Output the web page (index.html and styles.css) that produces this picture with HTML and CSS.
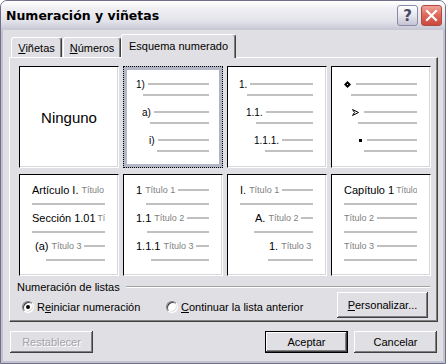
FILE: index.html
```html
<!DOCTYPE html>
<html lang="es">

<head>
  <meta charset="UTF-8">
  <title>Numeración y viñetas</title>
  <link rel="stylesheet" href="styles.css">
</head>

<body>
  <div class="window">
    <div class="titlebar">
      <span class="title">Numeración y viñetas</span>
      <span class="cap-btn help">?</span>
      <span class="cap-btn close">
        <svg width="13" height="13" viewBox="0 0 13 13"><path d="M2 2 L11 11 M11 2 L2 11" stroke="#fff" stroke-width="2.2" stroke-linecap="square" fill="none"/></svg>
      </span>
    </div>

    <div class="client">
      <div class="tabs">
        <div class="tab tab-1"><span><u>V</u>iñetas</span></div>
        <div class="tab tab-2"><span><u>N</u>úmeros</span></div>
        <div class="tab tab-3 active">Esquema numerado</div>
      </div>

      <div class="panel">
        <div class="gallery">
          <div class="box none">Ninguno</div>

          <div class="box outline selected">
            <div class="item">
              <div class="head m12"><span>1)</span><i class="rule"></i></div>
              <i class="rule m19"></i>
            </div>
            <div class="item">
              <div class="head m18"><span>a)</span><i class="rule"></i></div>
              <i class="rule m26"></i>
            </div>
            <div class="item">
              <div class="head m25"><span>i)</span><i class="rule"></i></div>
              <i class="rule m33"></i>
            </div>
          </div>

          <div class="box outline">
            <div class="item">
              <div class="head m11"><span>1.</span><i class="rule"></i></div>
              <i class="rule m19"></i>
            </div>
            <div class="item">
              <div class="head m18"><span>1.1.</span><i class="rule"></i></div>
              <i class="rule m28"></i>
            </div>
            <div class="item">
              <div class="head m26"><span>1.1.1.</span><i class="rule"></i></div>
              <i class="rule m37"></i>
            </div>
          </div>

          <div class="box outline">
            <div class="item">
              <div class="head m12">
                <svg class="bullet" width="7" height="7" viewBox="0 0 7 7"><path d="M3.5 0 L7 3.5 L3.5 7 L0 3.5Z" fill="#000"/><rect x="3" y="3" width="1" height="1" fill="#fff"/></svg>
                <i class="rule"></i>
              </div>
              <i class="rule m19"></i>
            </div>
            <div class="item">
              <div class="head m20">
                <svg class="bullet" width="7" height="7" viewBox="0 0 7 7"><path d="M0.5 0.5 L6.5 3.5 L0.5 6.5 L2.5 3.5Z" fill="none" stroke="#000" stroke-width="1"/></svg>
                <i class="rule"></i>
              </div>
              <i class="rule m26"></i>
            </div>
            <div class="item">
              <div class="head m27"><i class="dot"></i><i class="rule"></i></div>
              <i class="rule m32"></i>
            </div>
          </div>

          <div class="box heading">
            <div class="item">
              <div class="head m12"><span>Artículo I.</span><span class="ttl">Título</span><i class="rule"></i></div>
              <i class="rule m12"></i>
            </div>
            <div class="item">
              <div class="head m12"><span>Sección 1.01</span><span class="ttl tight">Tí</span></div>
              <i class="rule m12"></i>
            </div>
            <div class="item">
              <div class="head m15"><span>(a)</span><span class="ttl">Título 3</span><i class="rule"></i></div>
              <i class="rule m26"></i>
            </div>
          </div>

          <div class="box heading">
            <div class="item">
              <div class="head m12"><span>1</span><span class="ttl">Título 1</span><i class="rule"></i></div>
              <i class="rule m22"></i>
            </div>
            <div class="item">
              <div class="head m12"><span>1.1</span><span class="ttl">Título 2</span><i class="rule"></i></div>
              <i class="rule m23"></i>
            </div>
            <div class="item">
              <div class="head m12"><span>1.1.1</span><span class="ttl">Título 3</span><i class="rule"></i></div>
              <i class="rule m27"></i>
            </div>
          </div>

          <div class="box heading">
            <div class="item">
              <div class="head m12"><span>I.</span><span class="ttl">Título 1</span><i class="rule"></i></div>
              <i class="rule m12"></i>
            </div>
            <div class="item">
              <div class="head m27"><span>A.</span><span class="ttl">Título 2</span><i class="rule"></i></div>
              <i class="rule m26"></i>
            </div>
            <div class="item">
              <div class="head m41"><span>1.</span><span class="ttl">Título 3</span><i class="rule"></i></div>
              <i class="rule m40"></i>
            </div>
          </div>

          <div class="box heading">
            <div class="item">
              <div class="head m12"><span>Capítulo 1</span><span class="ttl tight">Título</span></div>
              <i class="rule m12"></i>
            </div>
            <div class="item">
              <div class="head m12"><span class="ttl first">Título 2</span><i class="rule"></i></div>
              <i class="rule m12"></i>
            </div>
            <div class="item">
              <div class="head m12"><span class="ttl first">Título 3</span><i class="rule"></i></div>
              <i class="rule m12"></i>
            </div>
          </div>
        </div>

        <div class="group">
          <span>Numeración de listas</span>
          <span class="etch"></span>
        </div>

        <div class="options">
          <label class="option opt-1"><span class="radio checked"></span><span>R<u>e</u>iniciar numeración</span></label>
          <label class="option"><span class="radio"></span><span><u>C</u>ontinuar la lista anterior</span></label>
          <button class="btn custom"><u>P</u>ersonalizar...</button>
        </div>
      </div>

      <div class="footer">
        <button class="btn disabled">Restablecer</button>
        <button class="btn default">Aceptar</button>
        <button class="btn">Cancelar</button>
      </div>
    </div>
  </div>
</body>

</html>
```

FILE: styles.css
```css
* {
  box-sizing: border-box;
}

body {
  margin: 0;
  background: #fff;
  font-family: "Liberation Sans", Arial, sans-serif;
  font-size: 11px;
  color: #000;
}

.window {
  width: 446px;
  height: 364px;
  background: #e0dfe3;
  border: 1px solid #6f6f87;
  border-radius: 7px 7px 0 0;
  display: flex;
  flex-direction: column;
  overflow: hidden;
}

.titlebar {
  height: 29px;
  flex: none;
  display: flex;
  align-items: center;
  padding: 0 3px 0 5px;
  background: linear-gradient(#ffffff, #f0f0f4 25%, #e2e2ea 70%, #c6c6d4);
}

.title {
  flex: 1;
  font: bold 12.5px "DejaVu Sans", sans-serif;
  color: #000;
}

.cap-btn {
  width: 21px;
  height: 21px;
  border-radius: 3px;
  display: flex;
  align-items: center;
  justify-content: center;
}

.help {
  margin-right: 3px;
  border: 1px solid #8a8aa6;
  background: linear-gradient(#ffffff, #e6e6ee 50%, #c4c4d4);
  font: bold 15px "DejaVu Sans", sans-serif;
  color: #4a4a62;
}

.close {
  border: 1px solid #b04a40;
  background: linear-gradient(#f0a49a, #e06a5c 45%, #c8493c);
}

.client {
  flex: 1;
  border: 2px solid #c2c2d2;
  border-top: none;
  padding: 4px 5px 0 6px;
  display: flex;
  flex-direction: column;
}

/* tabs */
.tabs {
  display: flex;
  align-items: flex-end;
  height: 23px;
  position: relative;
  z-index: 1;
}

.tab {
  height: 20px;
  background: #e0dfe3;
  border-top: 1px solid #fff;
  border-left: 1px solid #fff;
  border-right: 1px solid #404040;
  border-radius: 3px 3px 0 0;
  box-shadow: inset -1px 0 0 #808080;
  display: flex;
  align-items: center;
  justify-content: center;
  padding-top: 1px;
}

.tab-1 {
  width: 51px;
  margin-left: 2px;
}

.tab-2 {
  width: 58px;
  margin-left: 1px;
}

.tab-3 {
  width: 115px;
}

.tab.active {
  height: 24px;
  margin-bottom: -1px;
  padding-top: 0;
  padding-bottom: 1px;
}

/* panel */
.panel {
  height: 265px;
  border: 1px solid;
  border-color: #fff #404040 #404040 #fff;
  box-shadow: inset -1px -1px 0 #808080;
  padding: 8px 0 0 9px;
}

.gallery {
  display: grid;
  grid-template-columns: repeat(4, 100px);
  grid-template-rows: repeat(2, 102px);
  gap: 6px 4px;
}

.box {
  background: #fff;
  border: 1px solid;
  border-color: #000 #fff #fff #000;
  box-shadow: inset -1px -1px 0 #d8d8dc;
  padding-right: 13px;
  font-size: 10px;
  overflow: hidden;
}

/* selected: grey frame inside a dotted focus line */
.box.selected {
  border: 4px solid #b3b6c4;
  outline: 1px dotted #000;
  outline-offset: -1px;
  box-shadow: none;
  padding-top: 7px;
  padding-right: 10px;
}

.box.selected .item {
  margin-left: -3px;
}

.box.none {
  display: flex;
  align-items: center;
  justify-content: center;
  padding: 0;
  font-size: 15px;
}

.outline {
  padding-top: 10px;
}

.outline .item {
  height: 28px;
}

.heading {
  padding-top: 8px;
  font-size: 11px;
}

.heading .item {
  height: 28px;
}

.head {
  height: 14px;
  display: flex;
  align-items: center;
  white-space: nowrap;
  overflow: hidden;
}

.head span,
.head svg {
  flex: none;
}

.head .rule {
  flex: 1;
  min-width: 0;
  margin-left: 3px;
}

.rule {
  display: block;
  height: 2px;
  background: #c0c0c0;
}

.outline .item > .rule {
  margin-top: 3px;
}

.heading .item > .rule {
  margin-top: 6px;
}

.ttl {
  margin-left: 3px;
  font-size: 9px;
  color: #808080;
}

.ttl.first {
  margin-left: 0;
}

.ttl.tight {
  margin-left: 2px;
  font-size: 8.5px;
}

.bullet {
  display: block;
  margin-right: 2px;
}

.dot {
  flex: none;
  width: 3px;
  height: 3px;
  background: #000;
  margin-right: 2px;
}

.m11 { margin-left: 11px; }
.m12 { margin-left: 12px; }
.m15 { margin-left: 15px; }
.m18 { margin-left: 18px; }
.m19 { margin-left: 19px; }
.m20 { margin-left: 20px; }
.m22 { margin-left: 22px; }
.m23 { margin-left: 23px; }
.m25 { margin-left: 25px; }
.m26 { margin-left: 26px; }
.m27 { margin-left: 27px; }
.m28 { margin-left: 28px; }
.m32 { margin-left: 32px; }
.m33 { margin-left: 33px; }
.m37 { margin-left: 37px; }
.m40 { margin-left: 40px; }
.m41 { margin-left: 41px; }

/* list options */
.group {
  display: flex;
  align-items: center;
  height: 12px;
  margin: 5px 0 0 -2px;
}

.etch {
  flex: 1;
  margin: 0 7px 0 6px;
  border-top: 1px solid #a0a0a0;
  border-bottom: 1px solid #fff;
}

.options {
  display: flex;
  align-items: center;
  height: 26px;
  margin-top: -1px;
}

.option {
  display: flex;
  align-items: center;
  gap: 3px;
  padding-top: 3px;
}

.opt-1 {
  width: 144px;
  margin-left: 3px;
}

.radio {
  flex: none;
  width: 12px;
  height: 12px;
  border-radius: 50%;
  background: #fff;
  border: 1px solid;
  border-color: #808080 #fff #fff #808080;
  box-shadow: inset 1px 1px 0 #404040, inset -1px -1px 0 #e0dfe3;
  display: flex;
  align-items: center;
  justify-content: center;
}

.radio.checked::after {
  content: "";
  width: 4px;
  height: 4px;
  border-radius: 50%;
  background: #000;
}

.btn {
  width: 83px;
  height: 22px;
  padding: 0;
  border: none;
  background: #e0dfe3;
  font: 11px "Liberation Sans", Arial, sans-serif;
  color: #000;
  box-shadow: inset -1px -1px 0 #404040, inset 1px 1px 0 #fff, inset -2px -2px 0 #808080;
}

.custom {
  width: 91px;
  height: 26px;
  margin-left: auto;
  margin-right: 9px;
}

.footer {
  display: flex;
  margin-top: 9px;
  padding: 0 1px;
}

.disabled {
  color: #a3a2a8;
  text-shadow: 1px 1px 0 #fff;
}

.default {
  margin-left: auto;
  margin-right: 6px;
  border: 1px solid #000;
}
```
